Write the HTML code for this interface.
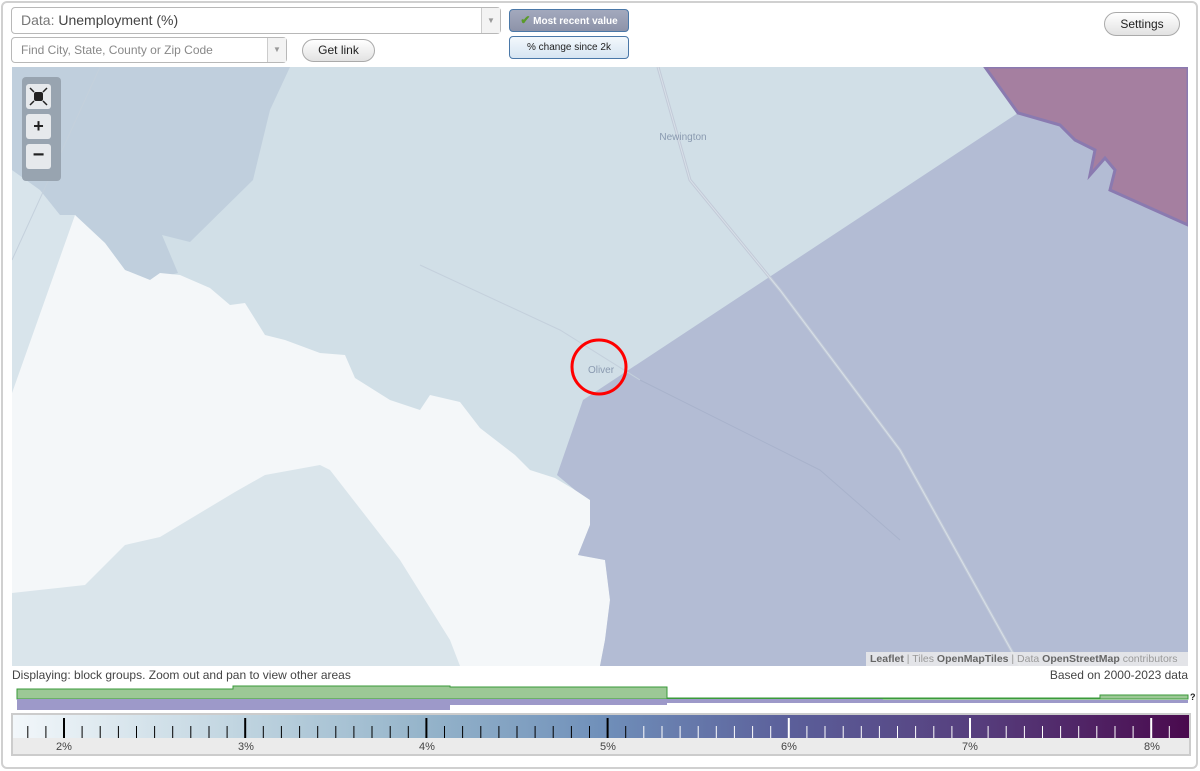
<!DOCTYPE html>
<html><head><meta charset="utf-8"><style>
*{box-sizing:border-box;margin:0;padding:0}
body{width:1200px;height:771px;background:#fff;font-family:"Liberation Sans",Arial,sans-serif;position:relative;overflow:hidden}
.frame{position:absolute;left:1px;top:1px;width:1197px;height:768px;border:2px solid #d0d0d0;border-radius:6px}
.sel{position:absolute;border:1px solid #b8b8b8;border-radius:4px;background:#fff;color:#444}
.arr{position:absolute;right:0;top:0;bottom:0;width:19px;border-left:1px solid #ccc;background:#f3f3f3;color:#999;font-size:8px;text-align:center}
.btn{position:absolute;border:1px solid #aaa;border-radius:12px;background:linear-gradient(#fff,#e2e2e2);font-size:12px;color:#222;text-align:center}
.tb{position:absolute;left:509px;width:120px;border:1px solid #4a78a8;border-radius:4px;font-size:10px;text-align:center}
.ctl{position:absolute;left:26px;width:25px;height:25px;background:#e6e9ec;border-radius:3px;text-align:center;font-weight:bold;color:#222}
</style></head><body>
<div class="frame"></div>
<div class="sel" style="left:11px;top:7px;width:490px;height:27px;font-size:14px;line-height:25px;padding-left:9px"><span style="color:#777">Data:</span> Unemployment (%)<div class="arr" style="line-height:25px">▼</div></div>
<div class="sel" style="left:11px;top:37px;width:276px;height:26px;font-size:12px;line-height:24px;padding-left:9px;color:#888">Find City, State, County or Zip Code<div class="arr" style="line-height:24px">▼</div></div>
<div class="btn" style="left:302px;top:39px;width:73px;height:23px;line-height:21px">Get link</div>
<div class="btn" style="left:1104px;top:12px;width:76px;height:24px;line-height:22px">Settings</div>
<div class="tb" style="top:9px;height:23px;line-height:21px;background:linear-gradient(#a3a9bd,#8d93a9);color:#fff;font-weight:bold"><span style="color:#5a9a2a;font-size:12px">✔</span> Most recent value</div>
<div class="tb" style="top:36px;height:23px;line-height:21px;background:linear-gradient(#f3f8fc,#d6e5f2);color:#222">% change since 2k</div>

<svg style="position:absolute;left:12px;top:67px" width="1176" height="599" viewBox="12 67 1176 599">
<rect x="12" y="67" width="1176" height="599" fill="#d1dfe7"/>
<polygon fill="#d8e4eb" points="12,170 40,190 60,215 75,215 12,393"/>
<polygon fill="#c0cfdd" points="12,67 290,67 270,110 253,180 190,242 162,235 178,273 150,280 125,270 105,243 75,215 60,215 40,190 12,170"/>
<polygon fill="#f4f7f9" points="75,215 105,243 125,270 150,280 160,273 180,275 210,288 230,305 245,303 265,335 285,340 320,353 345,355 355,378 390,400 420,410 430,395 460,402 480,428 515,455 530,470 555,478 575,490 590,500 590,525 578,555 605,560 610,600 605,640 600,666 12,666 12,393"/>
<polygon fill="#dae5eb" points="12,593 85,585 125,545 160,537 235,492 265,475 320,465 330,470 400,560 450,640 460,666 12,666"/>
<polygon fill="#b3bcd4" points="583,400 1018,113 1060,125 1075,140 1095,150 1090,175 1105,158 1115,170 1110,190 1188,225 1188,666 600,666 605,640 610,600 605,560 578,555 590,525 590,500 575,490 557,475"/>
<polygon fill="#a57fa0" stroke="#8a7ab0" stroke-width="3" points="985,67 1188,67 1188,225 1110,190 1115,170 1105,158 1090,175 1095,150 1075,140 1060,125 1018,113"/>
<g stroke="#c4d0dc" stroke-width="1" fill="none">
<path d="M12,260 L100,67"/><path d="M420,265 L560,330 L640,380"/>
<path d="M640,380 L820,470 L900,540" stroke="#a8b2cb"/>
</g>
<path d="M658,67 L690,180 L780,290 L900,450 L1020,666" stroke="#c2cad8" stroke-width="3" fill="none"/>
<path d="M658,67 L690,180 L780,290 L900,450 L1020,666" stroke="#d8e0e8" stroke-width="1" fill="none"/>
<text x="683" y="140" font-size="10" fill="#8a9ab0" text-anchor="middle" font-family="Liberation Sans">Newington</text>
<text x="601" y="373" font-size="10" fill="#8a9ab0" text-anchor="middle" font-family="Liberation Sans">Oliver</text>
<circle cx="599" cy="367" r="27" fill="none" stroke="#f00" stroke-width="3"/>
</svg>
<div style="position:absolute;left:22px;top:77px;width:39px;height:104px;background:#98a4b0;border-radius:4px"></div>
<div class="ctl" style="top:84px"><svg width="25" height="25"><rect x="8" y="8" width="9" height="9" rx="2" fill="#222"/><g stroke="#222" stroke-width="1.5"><path d="M4,4 L8,8 M21,4 L17,8 M4,21 L8,17 M21,21 L17,17"/></g></svg></div>
<div class="ctl" style="top:114px;font-size:18px;line-height:25px">+</div>
<div class="ctl" style="top:144px;font-size:20px;line-height:23px">−</div>
<div style="position:absolute;left:866px;top:652px;width:322px;height:14px;background:rgba(235,235,235,.85);font-size:10.5px;line-height:14px;padding-left:4px;color:#999"><b style="color:#666">Leaflet</b> | Tiles <b style="color:#666">OpenMapTiles</b> | Data <b style="color:#666">OpenStreetMap</b> contributors</div>
<div style="position:absolute;left:12px;top:668px;font-size:12px;color:#444">Displaying: block groups. Zoom out and pan to view other areas</div>
<div style="position:absolute;right:12px;top:668px;font-size:12px;color:#444">Based on 2000-2023 data</div>

<svg style="position:absolute;left:0;top:684px" width="1200" height="28">
<polygon fill="#9cc896" stroke="#3a9a3a" stroke-width="1" points="17,5 233,5 233,2 450,2 450,3 667,3 667,14 1100,14 1100,11 1188,11 1188,15 17,15"/>
<rect x="17" y="15" width="433" height="11" fill="#9d99c9"/>
<rect x="450" y="15" width="217" height="6" fill="#9d99c9"/>
<rect x="667" y="15" width="216" height="4" fill="#9d99c9"/>
<rect x="883" y="16" width="305" height="3" fill="#9d99c9"/>
<text x="1190" y="16" font-size="9" font-weight="bold" fill="#222" font-family="Liberation Sans">?</text>
</svg>
<div style="position:absolute;left:11px;top:713px;width:1180px;height:43px;border:2px solid #ccc;background:#ebebeb"></div>
<svg id="sc" style="position:absolute;left:13px;top:715px" width="1176" height="39" viewBox="13 715 1176 39">
<defs><linearGradient id="g" x1="0" x2="1"><stop offset="0" stop-color="#f2f7fa"/><stop offset=".2" stop-color="#bed3df"/><stop offset=".35" stop-color="#95b4ca"/><stop offset=".5" stop-color="#7090ba"/><stop offset=".66" stop-color="#5b5f9a"/><stop offset=".82" stop-color="#563e7d"/><stop offset="1" stop-color="#4a0a4e"/></linearGradient></defs>
<rect x="13" y="715" width="1176" height="23" fill="url(#g)"/>
<g id="t"></g>
<g font-size="11" fill="#444" text-anchor="middle" font-family="Liberation Sans">
<text x="64" y="750">2%</text><text x="246" y="750">3%</text><text x="427" y="750">4%</text><text x="608" y="750">5%</text><text x="789" y="750">6%</text><text x="970" y="750">7%</text><text x="1152" y="750">8%</text></g>
</svg>
<script>
var g=document.getElementById('t'),s='';
for(var k=-2;k<=62;k++){var x=64+k*18.12;if(x>1186)break;var maj=(k%10==0);var c=x<630?'#000':'#fff';
s+='<line x1="'+x.toFixed(1)+'" x2="'+x.toFixed(1)+'" y1="'+(maj?718:726)+'" y2="738" stroke="'+c+'" stroke-width="'+(maj?2:1)+'"/>';}
g.innerHTML=s;
</script>
</body></html>
